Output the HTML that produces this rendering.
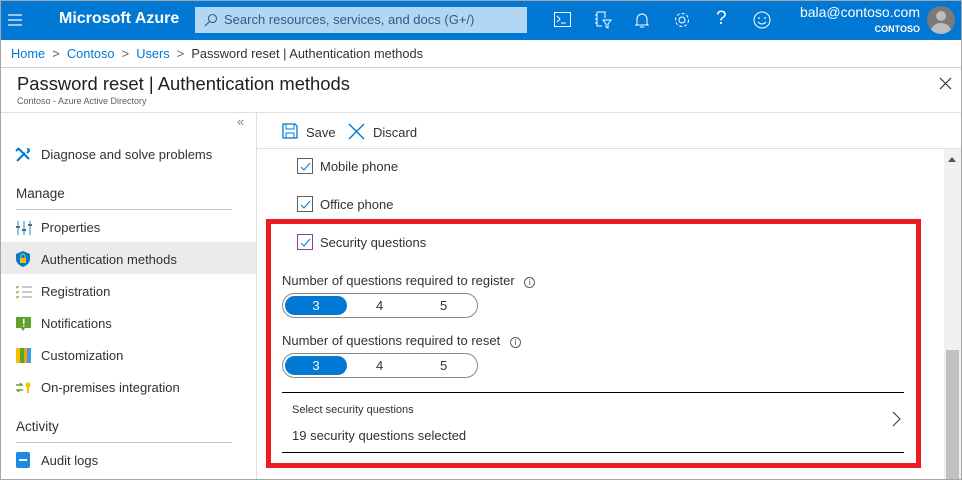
<!DOCTYPE html>
<html><head><meta charset="utf-8"><style>
*{box-sizing:border-box;margin:0;padding:0}
body{width:962px;height:480px;overflow:hidden;font-family:"Segoe UI","Liberation Sans",sans-serif;color:#323130;background:#fff;position:relative}
.abs{position:absolute}
.frame{position:absolute;left:0;top:0;width:962px;height:480px;border:1px solid #a6a6a6;pointer-events:none;z-index:10}
.nav{left:0;top:0;width:962px;height:40px;background:#0078d4;color:#fff}
.t{position:absolute;white-space:nowrap}
.menu span{display:block;position:absolute;left:8px;width:14px;height:2px;background:#9cc7ee}
.search{left:195px;top:7px;width:332px;height:26px;background:#b3d6f2;color:#2b5d8a;font-size:13px}
.item{font-size:13px;color:#323130}
.pill{position:absolute;width:196px;height:25px;border:1px solid #8a8886;border-radius:13px;font-size:13px}
.pill .sel{position:absolute;left:2px;top:2px;width:62px;height:19px;background:#0078d4;border-radius:10px;color:#fff;text-align:center;line-height:19px}
.pill .o{position:absolute;top:2px;line-height:19px}
.cb{position:absolute;width:16px;height:16px;border:1px solid #605e5c;background:#fff}
.cb svg{position:absolute;left:1px;top:1px}
</style></head><body>
<div class="abs nav">
 <div class="menu"><span style="top:14px"></span><span style="top:19px"></span><span style="top:24px"></span></div>
 <div class="t" style="left:59px;top:10px;font-size:16px;font-weight:bold">Microsoft Azure</div>
 <div class="abs search"><svg class="abs" style="left:9px;top:6px" width="14" height="14" viewBox="0 0 14 14"><circle cx="8.5" cy="5.5" r="4" fill="none" stroke="#2b5d8a" stroke-width="1.1"/><path d="M5.5 8.5L1 13" stroke="#2b5d8a" stroke-width="1.2"/></svg><div class="t" style="left:29px;top:5px">Search resources, services, and docs (G+/)</div></div>
 <svg class="abs" style="left:554px;top:12px" width="17" height="15" viewBox="0 0 17 15"><rect x=".5" y=".5" width="16" height="14" fill="none" stroke="#fff"/><path d="M3 4l3 3-3 3M7 11h5" stroke="#fff" fill="none"/></svg>
 <svg class="abs" style="left:594px;top:11px" width="18" height="18" viewBox="0 0 18 18"><path d="M3 1h8v6M3 1v14h5M1 4h2M1 8h2M1 12h2M9 9h8l-3 4v4l-2-1v-3z" stroke="#fff" fill="none"/></svg>
 <svg class="abs" style="left:635px;top:11px" width="14" height="18" viewBox="0 0 14 18"><path d="M2 13V8a5 5 0 0110 0v5l1 1H1zM5 16h4" stroke="#fff" fill="none"/></svg>
 <svg class="abs" style="left:673px;top:11px" width="18" height="18" viewBox="0 0 18 18"><circle cx="9" cy="9" r="3" fill="none" stroke="#fff"/><circle cx="9" cy="9" r="6.5" fill="none" stroke="#fff" stroke-dasharray="3 2"/></svg>
 <div class="t" style="left:716px;top:8px;font-size:19px;color:#fff">?</div>
 <svg class="abs" style="left:753px;top:11px" width="18" height="18" viewBox="0 0 18 18"><circle cx="9" cy="9" r="8" fill="none" stroke="#fff"/><circle cx="6" cy="7" r=".9" fill="#fff"/><circle cx="12" cy="7" r=".9" fill="#fff"/><path d="M5 11q4 4 8 0" stroke="#fff" fill="none"/></svg>
 <div class="t" style="right:42px;top:4px;font-size:14px">bala@contoso.com</div>
 <div class="t" style="right:42px;top:24px;font-size:9px;font-weight:bold">CONTOSO</div>
 <div class="abs" style="left:927px;top:6px;width:28px;height:28px;border-radius:50%;background:#7a7a7a;overflow:hidden"><div class="abs" style="left:9px;top:5px;width:10px;height:10px;border-radius:50%;background:#bdbdbd"></div><div class="abs" style="left:4px;top:17px;width:20px;height:16px;border-radius:50%;background:#bdbdbd"></div></div>
</div>
<div class="t" style="left:11px;top:46px;font-size:12.8px;color:#0078d4">Home <span style="color:#605e5c">&nbsp;&gt;&nbsp;</span> Contoso <span style="color:#605e5c">&nbsp;&gt;&nbsp;</span> Users <span style="color:#605e5c">&nbsp;&gt;&nbsp;</span> <span style="color:#323130">Password reset | Authentication methods</span></div>
<div class="abs" style="left:0;top:67px;width:962px;height:1px;background:#d0d0d0"></div>
<div class="t" style="left:17px;top:73px;font-size:18.4px;color:#201f1e">Password reset | Authentication methods</div>
<div class="t" style="left:17px;top:96px;font-size:9px;color:#605e5c">Contoso - Azure Active Directory</div>
<svg class="abs" style="left:939px;top:77px" width="13" height="13"><path d="M1 1l11 11M12 1L1 12" stroke="#323130" stroke-width="1.2"/></svg>
<div class="abs" style="left:0;top:112px;width:962px;height:1px;background:#e1dfdd"></div>
<div class="abs" style="left:256px;top:112px;width:1px;height:368px;background:#e1dfdd"></div>
<div class="t" style="left:237px;top:114px;font-size:13px;color:#8a8886">«</div>
<svg class="abs" style="left:15px;top:147px" width="16" height="16" viewBox="0 0 16 16"><path d="M2 14L10 6M4 2l10 10M1 4l3-3M12 2q2 0 2 2l-2 2" stroke="#0078d4" stroke-width="2" fill="none"/></svg>
<div class="t item" style="left:41px;top:147px">Diagnose and solve problems</div>
<div class="t item" style="left:16px;top:186px;font-size:13.5px">Manage</div>
<div class="abs" style="left:16px;top:209px;width:216px;height:1px;background:#c8c6c4"></div>
<svg class="abs" style="left:16px;top:221px" width="16" height="14"><rect x="1" y="0" width="2" height="14" fill="#8cc4ea"/><rect x="7" y="0" width="2" height="14" fill="#8cc4ea"/><rect x="13" y="0" width="2" height="14" fill="#8cc4ea"/><rect x="0" y="5" width="4" height="2" fill="#666"/><rect x="6" y="8" width="4" height="2" fill="#666"/><rect x="12" y="3" width="4" height="2" fill="#666"/></svg>
<div class="t item" style="left:41px;top:220px">Properties</div>
<div class="abs" style="left:1px;top:242px;width:255px;height:32px;background:#edebe9"></div>
<svg class="abs" style="left:16px;top:251px" width="14" height="16"><path d="M7 0L14 3v5q0 5-7 8Q0 13 0 8V3z" fill="#0078d4"/><rect x="4" y="7" width="6" height="5" fill="#f6c000"/><path d="M5 7V5a2 2 0 014 0v2" stroke="#f6c000" fill="none"/></svg>
<div class="t item" style="left:41px;top:252px">Authentication methods</div>
<svg class="abs" style="left:16px;top:285px" width="16" height="14"><path d="M6 2h10M6 7h10M6 12h10" stroke="#999"/><path d="M0 2l1 1 2-2M0 7l1 1 2-2M0 12l1 1 2-2" stroke="#9bc83a"/></svg>
<div class="t item" style="left:41px;top:284px">Registration</div>
<svg class="abs" style="left:16px;top:317px" width="15" height="14"><rect width="15" height="11" fill="#5ea32e"/><path d="M5 11l2 3 2-3z" fill="#5ea32e"/><rect x="7" y="2" width="1.5" height="5" fill="#fff"/><rect x="7" y="8" width="1.5" height="1.5" fill="#fff"/></svg>
<div class="t item" style="left:41px;top:316px">Notifications</div>
<svg class="abs" style="left:16px;top:348px" width="15" height="15"><rect width="4" height="15" fill="#f6c000"/><rect x="4" width="4" height="15" fill="#5ea32e"/><rect x="8" width="3" height="15" fill="#f7a200"/><rect x="11" width="4" height="15" fill="#3c9ee6"/></svg>
<div class="t item" style="left:41px;top:348px">Customization</div>
<svg class="abs" style="left:16px;top:382px" width="16" height="12"><path d="M0 3h6l-2-2M7 8H1l2 2" stroke="#5ea32e" stroke-width="1.5" fill="none"/><circle cx="12" cy="3" r="2.5" fill="#f6c000"/><rect x="11" y="4" width="2" height="7" fill="#f6c000"/></svg>
<div class="t item" style="left:41px;top:380px">On-premises integration</div>
<div class="t item" style="left:16px;top:419px;font-size:13.5px">Activity</div>
<div class="abs" style="left:16px;top:442px;width:216px;height:1px;background:#c8c6c4"></div>
<div class="abs" style="left:16px;top:452px;width:14px;height:16px;background:#1e88e5;border-radius:2px"><div class="abs" style="left:3px;top:7px;width:8px;height:2px;background:#fff"></div></div>
<div class="t item" style="left:41px;top:453px">Audit logs</div>
<svg class="abs" style="left:282px;top:123px" width="16" height="16" viewBox="0 0 16 16"><path d="M1 1h12l2 2v12H1z" fill="none" stroke="#0078d4" stroke-width="1.3"/><rect x="4" y="1" width="8" height="5" fill="none" stroke="#0078d4"/><rect x="4" y="10" width="8" height="5" fill="none" stroke="#0078d4"/></svg>
<div class="t item" style="left:306px;top:125px">Save</div>
<svg class="abs" style="left:348px;top:123px" width="17" height="17"><path d="M1 1l15 15M16 1L1 16" stroke="#0078d4" stroke-width="1.4"/></svg>
<div class="t item" style="left:373px;top:125px">Discard</div>
<div class="abs" style="left:257px;top:148px;width:705px;height:1px;background:#e1dfdd"></div>
<div class="abs" style="left:944px;top:149px;width:17px;height:330px;background:#f0f0f0"></div>
<div class="abs" style="left:946px;top:350px;width:13px;height:129px;background:#c1c1c1"></div>
<svg class="abs" style="left:948px;top:157px" width="8" height="5"><path d="M0 5L4 0l4 5z" fill="#555"/></svg>
<div class="cb" style="left:297px;top:158px"><svg width="13" height="13"><path d="M2 7l3 3 6-7" stroke="#0078d4" fill="none"/></svg></div>
<div class="t item" style="left:320px;top:159px">Mobile phone</div>
<div class="cb" style="left:297px;top:196px"><svg width="13" height="13"><path d="M2 7l3 3 6-7" stroke="#0078d4" fill="none"/></svg></div>
<div class="t item" style="left:320px;top:197px">Office phone</div>
<div class="cb" style="left:297px;top:234px;border-color:#8a3f9e"><svg width="13" height="13"><path d="M2 7l3 3 6-7" stroke="#0078d4" fill="none"/></svg></div>
<div class="t item" style="left:320px;top:235px">Security questions</div>
<div class="t item" style="left:282px;top:273px">Number of questions required to register <span style="display:inline-block;width:11px;height:11px;border:1px solid #605e5c;border-radius:50%;font-size:8px;text-align:center;line-height:9px;margin-left:6px">i</span></div>
<div class="pill" style="left:282px;top:293px"><div class="sel">3</div><div class="o" style="left:93px">4</div><div class="o" style="left:157px">5</div></div>
<div class="t item" style="left:282px;top:333px">Number of questions required to reset <span style="display:inline-block;width:11px;height:11px;border:1px solid #605e5c;border-radius:50%;font-size:8px;text-align:center;line-height:9px;margin-left:6px">i</span></div>
<div class="pill" style="left:282px;top:353px"><div class="sel">3</div><div class="o" style="left:93px">4</div><div class="o" style="left:157px">5</div></div>
<div class="abs" style="left:282px;top:392px;width:622px;height:1px;background:#000"></div>
<div class="t" style="left:292px;top:404px;font-size:11px;color:#323130">Select security questions</div>
<div class="t item" style="left:292px;top:428px">19 security questions selected</div>
<svg class="abs" style="left:892px;top:411px" width="9" height="16"><path d="M1 1l7 7-7 7" stroke="#323130" fill="none"/></svg>
<div class="abs" style="left:282px;top:452px;width:622px;height:1px;background:#000"></div>
<div class="abs" style="left:266px;top:219px;width:655px;height:249px;border:5px solid #ed1c24"></div>
<div class="frame"></div>
</body></html>
